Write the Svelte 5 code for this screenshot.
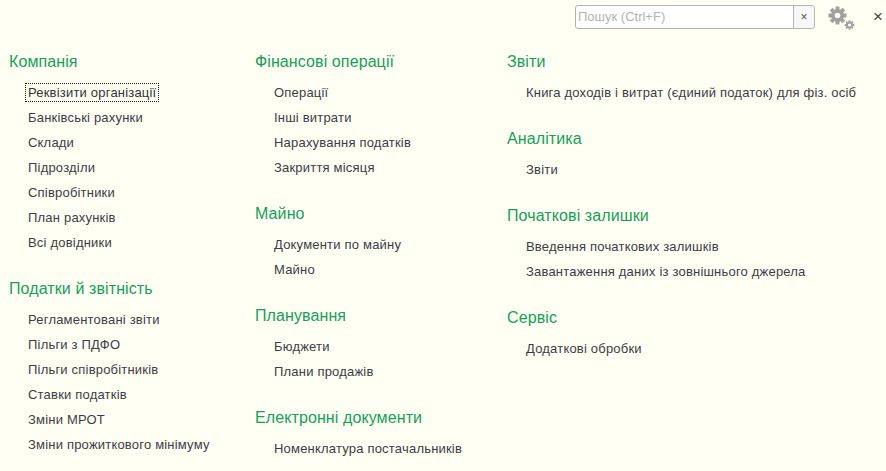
<script>
	const columns = [
		[
			{ title: 'Компанія', items: ['Реквізити організації', 'Банківські рахунки', 'Склади', 'Підрозділи', 'Співробітники', 'План рахунків', 'Всі довідники'] },
			{ title: 'Податки й звітність', items: ['Регламентовані звіти', 'Пільги з ПДФО', 'Пільги співробітників', 'Ставки податків', 'Зміни МРОТ', 'Зміни прожиткового мінімуму'] }
		],
		[
			{ title: 'Фінансові операції', items: ['Операції', 'Інші витрати', 'Нарахування податків', 'Закриття місяця'] },
			{ title: 'Майно', items: ['Документи по майну', 'Майно'] },
			{ title: 'Планування', items: ['Бюджети', 'Плани продажів'] },
			{ title: 'Електронні документи', items: ['Номенклатура постачальників'] }
		],
		[
			{ title: 'Звіти', items: ['Книга доходів і витрат (єдиний податок) для фіз. осіб'] },
			{ title: 'Аналітика', items: ['Звіти'] },
			{ title: 'Початкові залишки', items: ['Введення початкових залишків', 'Завантаження даних із зовнішнього джерела'] },
			{ title: 'Сервіс', items: ['Додаткові обробки'] }
		]
	];
</script>

<div class="page">
	<header class="toolbar">
		<div class="search">
			<span class="placeholder">Пошук (Ctrl+F)</span>
			<span class="clear">×</span>
		</div>
		<svg class="gears" width="27" height="24" viewBox="0 0 27 24">
			<g fill="#a0a0a0">
				<circle cx="9.5" cy="9.5" r="6.5" />
				<g stroke="#a0a0a0" stroke-width="3.8">
					<path d="M9.5 .5v18M.5 9.5h18M3.1 3.1l12.8 12.8M15.9 3.1L3.1 15.9" />
				</g>
				<circle cx="21.5" cy="19" r="3.4" />
				<g stroke="#a0a0a0" stroke-width="1.8">
					<path d="M21.5 14.2v9.6M16.7 19h9.6M18.1 15.6l6.8 6.8M24.9 15.6l-6.8 6.8" />
				</g>
			</g>
			<circle cx="9.5" cy="9.5" r="2.8" fill="#fffff3" />
			<circle cx="21.5" cy="19" r="1.6" fill="#fffff3" />
		</svg>
		<span class="close">×</span>
	</header>

	<main class="columns">
		{#each columns as groups, c}
			<div class="column col-{c}">
				{#each groups as group}
					<section class="group">
						<h2>{group.title}</h2>
						<ul>
							{#each group.items as item}
								<li><span class:focused={item === 'Реквізити організації'}>{item}</span></li>
							{/each}
						</ul>
					</section>
				{/each}
			</div>
		{/each}
	</main>
</div>

<style>
	:global(body) {
		margin: 0;
		background: #fffff3;
	}

	.page {
		width: 886px;
		height: 471px;
		overflow: hidden;
		background: #fffff3;
		font-family: "Liberation Sans", Arial, sans-serif;
		color: #3c3c46;
	}

	.toolbar {
		display: flex;
		align-items: center;
		height: 24px;
		padding: 5px 0 0 575px;
	}

	.search {
		display: flex;
		align-items: stretch;
		width: 238px;
		height: 22px;
		border: 1px solid #b4b4b4;
		border-radius: 3px;
		background: #fff;
		font-size: 13px;
	}

	.placeholder {
		flex: 1;
		padding-left: 2px;
		line-height: 22px;
		color: #b4b4b4;
	}

	.clear {
		width: 20px;
		border-left: 1px solid #b4b4b4;
		background: #f7f7f7;
		border-radius: 0 3px 3px 0;
		text-align: center;
		line-height: 22px;
		font-size: 12px;
		color: #555;
	}

	.gears {
		margin: 1px 0 0 13px;
		flex: none;
	}

	.close {
		margin-left: 18px;
		font-size: 17px;
		color: #444;
	}

	.columns {
		display: grid;
		grid-template-columns: 246px 252px 1fr;
		padding: 20px 0 0 9px;
	}

	.group + .group {
		margin-top: 21px;
	}

	h2 {
		margin: 0;
		height: 25px;
		font-size: 16px;
		font-weight: 400;
		line-height: 25px;
		letter-spacing: 0.1px;
		color: #14a05a;
	}

	ul {
		margin: 6px 0 0;
		padding: 0 0 0 19px;
		list-style: none;
	}

	li {
		height: 25px;
		font-size: 13px;
		line-height: 25px;
		letter-spacing: 0.2px;
		white-space: nowrap;
	}

	.focused {
		outline: 1px dotted #222;
		padding: 1px 2px;
		margin-left: -2px;
		color: #333;
	}
</style>
